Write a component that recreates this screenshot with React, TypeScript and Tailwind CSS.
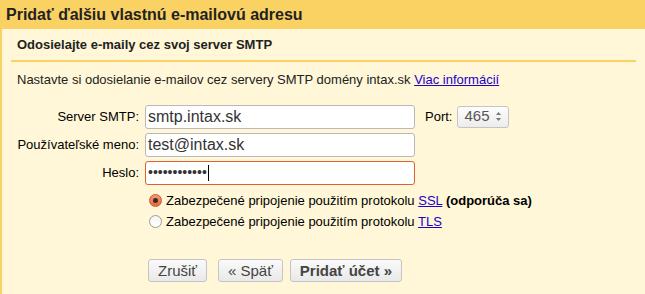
const font = { fontFamily: '"Liberation Sans", Arial, sans-serif' };

function Field({ label, value, danger, password }: { label: string; value: string; danger?: boolean; password?: boolean }) {
  return (
    <>
      <label className="text-right text-[13px] leading-[23px] text-black">{label}</label>
      <div
        className={`flex h-[24px] w-[270px] items-center rounded-[3px] border bg-white px-[2px] text-[16px] text-[#333] ${
          danger ? 'border-[#e0602f]' : 'border-[#b9b9b9]'
        }`}
      >
        {password ? (
          <span className="flex items-center">
            <span className="text-[14px] text-[#333]">{value}</span>
            <span className="ml-[1px] h-[16px] w-[1px] bg-black" />
          </span>
        ) : (
          value
        )}
      </div>
    </>
  );
}

function Radio({ checked }: { checked?: boolean }) {
  return checked ? (
    <span className="flex h-[13px] w-[13px] items-center justify-center rounded-full border border-[#c85a33] bg-gradient-to-b from-[#f39a78] to-[#e5683c]">
      <span className="h-[5px] w-[5px] rounded-full bg-[#3a2a22]" />
    </span>
  ) : (
    <span className="h-[13px] w-[13px] rounded-full border border-[#9a9a9a] bg-gradient-to-b from-[#f4f4f4] to-white" />
  );
}

function Btn({ children, bold }: { children: React.ReactNode; bold?: boolean }) {
  return (
    <button
      type="button"
      className={`h-[23px] rounded-[3px] border border-[#c4c4c4] bg-gradient-to-b from-[#fafafa] to-[#e9e9e9] px-[9px] text-[15px] leading-none text-[#444] ${
        bold ? 'font-bold' : ''
      }`}
    >
      {children}
    </button>
  );
}

export default function App() {
  return (
    <div className="flex h-[294px] w-[645px] flex-col bg-[#fff7d7]" style={font}>
      <div className="flex h-[29px] items-center bg-[#fad163] pl-[6px] text-[16px] font-bold text-[#222]">
        Pridať ďalšiu vlastnú e-mailovú adresu
      </div>

      <div className="flex flex-1 flex-col border-l-2 border-[#fad163]">
        <div className="mx-[9px] flex h-[33px] items-center border-b-2 border-[#fad163] pl-[6px] text-[13px] font-bold text-[#222]">
          Odosielajte e-maily cez svoj server SMTP
        </div>

        <p className="mt-[8px] pl-[15px] text-[13px] text-[#222]">
          Nastavte si odosielanie e-mailov cez servery SMTP domény intax.sk{' '}
          <a href="#" className="text-[#2200cc] underline">
            Viac informácií
          </a>
        </p>

        <div className="mt-[15px] flex items-start">
          <div className="grid grid-cols-[137px_auto] gap-x-[6px] gap-y-[4px]">
            <Field label="Server SMTP:" value="smtp.intax.sk" />
            <Field label="Používateľské meno:" value="test@intax.sk" />
            <Field label="Heslo:" value="••••••••••••" danger password />
          </div>
          <div className="ml-[10px] flex h-[24px] items-center gap-[5px]">
            <span className="text-[13px] text-black">Port:</span>
            <div className="flex h-[22px] w-[52px] items-center justify-between rounded-[3px] border border-[#c4c4c4] bg-gradient-to-b from-[#fdfdfd] to-[#ececec] pl-[6px] pr-[6px] text-[15px] text-[#555]">
              465
              <svg width="7" height="11" viewBox="0 0 7 11">
                <path d="M3.5 1 L6 4 L1 4 Z" fill="#777" />
                <path d="M3.5 10 L6 7 L1 7 Z" fill="#777" />
              </svg>
            </div>
          </div>
        </div>

        <div className="ml-[147px] mt-[6px] flex flex-col gap-[2px] text-[13px] text-black">
          <div className="flex items-center gap-[4px]">
            <Radio checked />
            <span>
              Zabezpečené pripojenie použitím protokolu{' '}
              <a href="#" className="text-[#2200cc] underline">
                SSL
              </a>{' '}
              <b>(odporúča sa)</b>
            </span>
          </div>
          <div className="flex items-center gap-[4px]">
            <Radio />
            <span>
              Zabezpečené pripojenie použitím protokolu{' '}
              <a href="#" className="text-[#2200cc] underline">
                TLS
              </a>
            </span>
          </div>
        </div>

        <div className="ml-[146px] mt-[27px] flex gap-[11px]">
          <Btn>Zrušiť</Btn>
          <div className="flex gap-[7px]">
            <Btn>« Späť</Btn>
            <Btn bold>Pridať účet »</Btn>
          </div>
        </div>
      </div>
    </div>
  );
}
